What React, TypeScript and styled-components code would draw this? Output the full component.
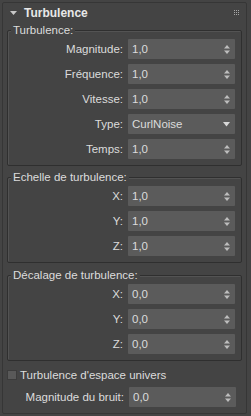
import { createGlobalStyle } from "styled-components";
import styled from "styled-components";

const text = "#dcdcdc";
const fieldBg = "#5b5b5b";

const GlobalStyle = createGlobalStyle`
	html, body {
		margin: 0;
		padding: 0;
		background: #444444;
	}
	body {
		font-family: "Liberation Sans", Arial, sans-serif;
		font-size: 11px;
		color: ${text};
	}
`;

const Rollout = styled.div`
	width: 245px;
	height: 412px;
	box-sizing: border-box;
	margin: 2px 0 0 2px;
	border: 1px solid #363636;
	border-radius: 2px;
	display: flex;
	flex-direction: column;
`;

const Header = styled.div`
	height: 19px;
	display: flex;
	align-items: center;
	padding: 0 7px 0 7px;
	gap: 7px;
`;

const HeaderTitle = styled.span`
	font-weight: 700;
	font-size: 12px;
	color: #e8e8e8;
	flex: 1;
`;

const Body = styled.div`
	padding: 0 0 0 4px;
	display: flex;
	flex-direction: column;
`;

const Group = styled.div<{ $top: number }>`
	margin-top: ${(p) => p.$top}px;
	width: 235px;
	box-sizing: border-box;
	border: 1px solid #2f2f2f;
	box-shadow: inset 1px 1px 0 #535353;
	border-radius: 2px;
	padding: 0 6px 6px 0;
	display: flex;
	flex-direction: column;
	gap: 5px;
`;

const GroupTitle = styled.span`
	align-self: flex-start;
	margin: -8px 0 -3px 3px;
	padding: 0 2px;
	background: #444444;
	line-height: 14px;
	font-size: 11.5px;
`;

const Row = styled.div`
	display: grid;
	grid-template-columns: 1fr 107px;
	column-gap: 5px;
	align-items: center;
	height: 20px;
`;

const Label = styled.span`
	text-align: right;
	white-space: nowrap;
	font-size: 11.5px;
`;

const Field = styled.div`
	height: 20px;
	background: ${fieldBg};
	border-radius: 1px;
	display: flex;
	align-items: center;
	padding: 0 5px 0 4px;
	box-sizing: border-box;
	font-size: 11.5px;
`;

const Value = styled.span`
	flex: 1;
`;

const CheckRow = styled.label`
	display: flex;
	align-items: center;
	gap: 3px;
	margin-top: 9px;
	height: 10px;
	font-size: 11.5px;
`;

const Box = styled.span`
	width: 10px;
	height: 10px;
	background: #595959;
	border: 1px solid #3c3c3c;
	box-sizing: border-box;
`;

const Standalone = styled.div`
	margin-top: 7px;
	width: 229px;
`;

function Spinner() {
	return (
		<svg width="6" height="9" viewBox="0 0 6 9">
			<path d="M3 0 L6 3.5 L0 3.5 Z" fill="#bdbdbd" />
			<path d="M0 5.5 L6 5.5 L3 9 Z" fill="#bdbdbd" />
		</svg>
	);
}

function Caret() {
	return (
		<svg width="7" height="5" viewBox="0 0 7 5">
			<path d="M0 0 L7 0 L3.5 4.5 Z" fill="#d8d8d8" />
		</svg>
	);
}

function Grip() {
	const dots = [];
	for (let r = 0; r < 3; r++)
		for (let c = 0; c < 3; c++)
			dots.push(<rect key={r * 3 + c} x={c * 2} y={r * 2} width="1" height="1" fill="#a8a8a8" />);
	return (
		<svg width="5" height="5" viewBox="0 0 5 5">
			{dots}
		</svg>
	);
}

function SpinRow({ label, value }: { label: string; value: string }) {
	return (
		<Row>
			<Label>{label}</Label>
			<Field>
				<Value>{value}</Value>
				<Spinner />
			</Field>
		</Row>
	);
}

export default function App() {
	return (
		<>
			<GlobalStyle />
			<Rollout>
				<Header>
					<svg width="7" height="4" viewBox="0 0 7 4">
						<path d="M0 0 L7 0 L3.5 4 Z" fill="#c8c8c8" />
					</svg>
					<HeaderTitle>Turbulence</HeaderTitle>
					<Grip />
				</Header>
				<Body>
					<Group $top={8}>
						<GroupTitle>Turbulence:</GroupTitle>
						<SpinRow label="Magnitude:" value="1,0" />
						<SpinRow label="Fréquence:" value="1,0" />
						<SpinRow label="Vitesse:" value="1,0" />
						<Row>
							<Label>Type:</Label>
							<Field>
								<Value>CurlNoise</Value>
								<Caret />
							</Field>
						</Row>
						<SpinRow label="Temps:" value="1,0" />
					</Group>
					<Group $top={11}>
						<GroupTitle>Echelle de turbulence:</GroupTitle>
						<SpinRow label="X:" value="1,0" />
						<SpinRow label="Y:" value="1,0" />
						<SpinRow label="Z:" value="1,0" />
					</Group>
					<Group $top={12}>
						<GroupTitle>Décalage de turbulence:</GroupTitle>
						<SpinRow label="X:" value="0,0" />
						<SpinRow label="Y:" value="0,0" />
						<SpinRow label="Z:" value="0,0" />
					</Group>
					<CheckRow>
						<Box />
						Turbulence d'espace univers
					</CheckRow>
					<Standalone>
						<SpinRow label="Magnitude du bruit:" value="0,0" />
					</Standalone>
				</Body>
			</Rollout>
		</>
	);
}
